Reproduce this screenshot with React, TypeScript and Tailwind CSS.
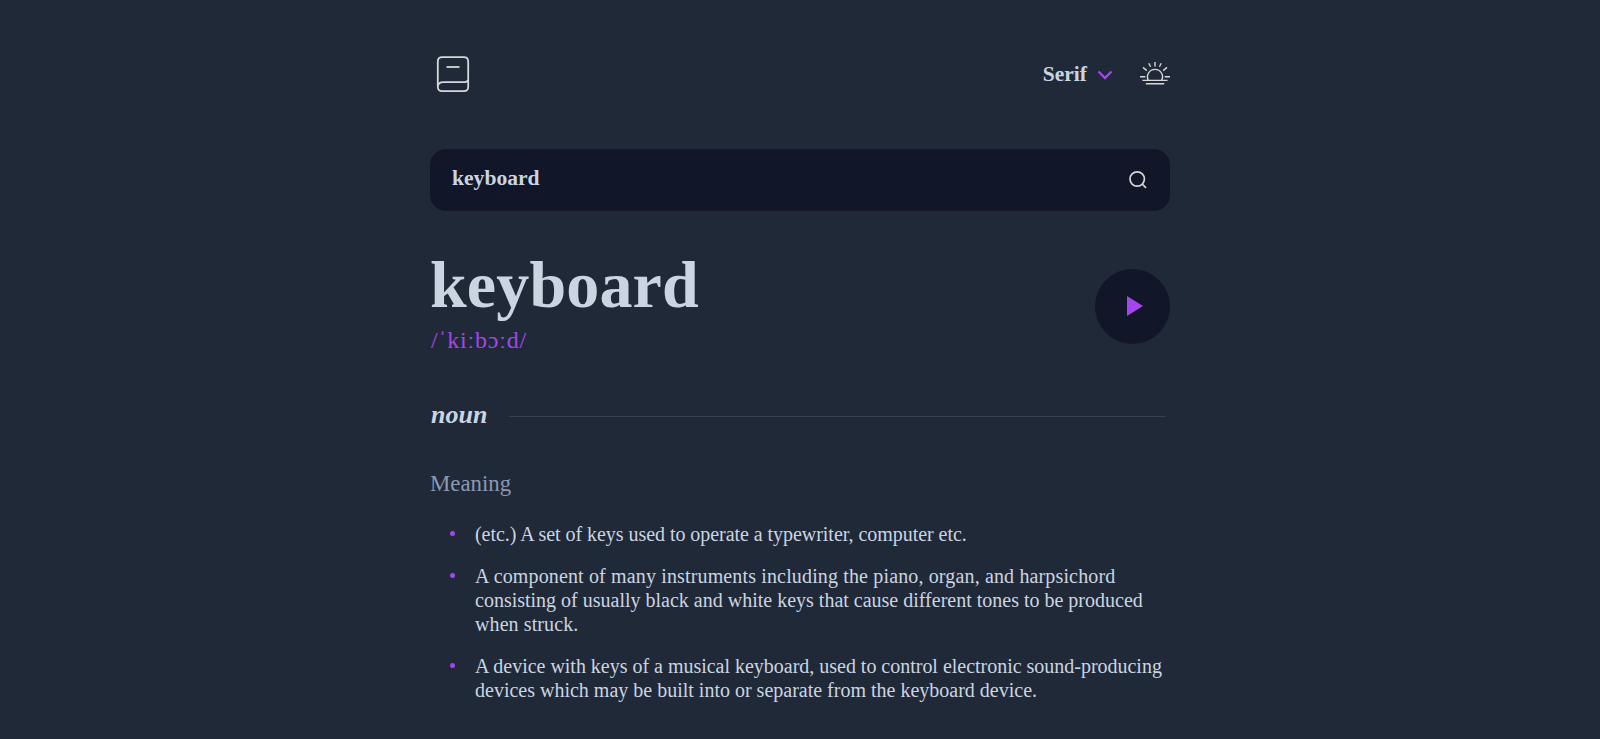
import React from "react";

const meanings = [
  [{ text: "(etc.) A set of keys used to operate a typewriter, computer etc.", tracking: "tracking-[-0.045px]" }],
  [
    { text: "A component of many instruments including the piano, organ, and harpsichord", tracking: "tracking-[0.145px]" },
    { text: "consisting of usually black and white keys that cause different tones to be produced", tracking: "tracking-[0px]" },
    { text: "when struck.", tracking: "tracking-[0.1px]" },
  ],
  [
    { text: "A device with keys of a musical keyboard, used to control electronic sound-producing", tracking: "tracking-[-0.015px]" },
    { text: "devices which may be built into or separate from the keyboard device.", tracking: "tracking-[0px]" },
  ],
];

function BookIcon() {
  return (
    <svg width="34" height="38" viewBox="0 0 34 38" fill="none" stroke="#d5d7da" strokeWidth="1.8">
      <path d="M1.8 32V6.5Q1.8 2.2 6.3 2.2H27.7Q32.2 2.2 32.2 6.5V32Q32.2 36.2 27.7 36.2H6.3Q1.8 36.2 1.8 32Q1.8 27.2 7.5 27.2H27.5Q31.5 27.2 32.2 24.5" />
      <path d="M10.5 12H23.5" />
    </svg>
  );
}

function SunIcon() {
  return (
    <svg width="30" height="24" viewBox="0 0 30 24" fill="none" stroke="#d5d7da" strokeWidth="1.4">
      <path d="M2.5 18.4H27.5M5.8 21.7H24.2M8.4 18.4A7.5 7.5 0 1 1 21.6 18.4M0 14.7H5.3M24.7 14.7H30M15 0V4.5M8.8 1.2L10.6 4.8M21.2 1.2L19.4 4.8M3 5.4L6.8 8.6M27 5.4L23.2 8.6" />
    </svg>
  );
}

export default function App() {
  return (
    <div className="h-[739px] overflow-hidden bg-[#202938] font-['Liberation_Serif',serif] text-[#cbd5e1]">
      <main className="mx-auto w-[740px] pt-[55px]">
        <header className="flex h-[38px] items-center justify-between">
          <div className="ml-[6px]">
            <BookIcon />
          </div>
          <div className="flex items-center">
            <span className="mr-[10px] text-[21.5px] leading-6 font-bold">Serif</span>
            <svg className="mr-[27px] mt-0.5" width="16" height="10" viewBox="0 0 16 10" fill="none" stroke="#a445ed" strokeWidth="2.3">
              <path d="M1.5 1.5L8 8L14.5 1.5" />
            </svg>
            <SunIcon />
          </div>
        </header>

        <div className="mt-14 flex h-[62px] items-center justify-between rounded-2xl bg-[#111628] pr-[22px] pl-[22px]">
          <span className="mb-[5px] text-[21.6px] leading-7 font-bold">keyboard</span>
          <svg width="20" height="20" viewBox="0 0 20 20" fill="none" stroke="#d5d7da" strokeWidth="1.7">
            <circle cx="9.2" cy="9" r="7.2" />
            <path d="M14.2 14L18 17.8" />
          </svg>
        </div>

        <section className="mt-[41px] flex justify-between">
          <div>
            <h1 className="text-[66px] leading-[66px] font-bold tracking-[0.15px]">keyboard</h1>
            <p className="mt-1.5 pl-px text-2xl leading-8 tracking-[0.8px] text-[#a445ed]">/ˈkiːbɔːd/</p>
          </div>
          <button className="mt-[17px] flex h-[75px] w-[75px] items-center justify-center rounded-full bg-[#111628]">
            <svg className="mb-px ml-[5px]" width="16" height="20" viewBox="0 0 16 20" fill="#a445ed">
              <path d="M0 0L16 10L0 20Z" />
            </svg>
          </button>
        </section>

        <div className="mt-[43px] flex items-center">
          <h2 className="w-[79px] pl-px text-[26px] leading-8 font-bold italic">noun</h2>
          <div className="mt-[3px] mr-[5px] h-px flex-1 bg-[#374151]" />
        </div>

        <h3 className="mt-[37px] text-[22.8px] leading-8 text-[#8b99b2]">Meaning</h3>

        <ul className="mt-[21px] flex flex-col gap-[18px] text-xl leading-6">
          {meanings.map((lines, i) => (
            <li key={i} className="flex items-start">
              <span className="mt-[10px] mr-5 ml-5 h-[5px] w-[5px] shrink-0 rounded-full bg-[#a445ed]" />
              <div className="pt-px">
                {lines.map((line, j) => (
                  <span key={line.text} className={`block whitespace-nowrap ${line.tracking} ${j === lines.length - 1 ? "-mb-px" : ""}`}>
                    {line.text}
                  </span>
                ))}
              </div>
            </li>
          ))}
        </ul>
      </main>
    </div>
  );
}
